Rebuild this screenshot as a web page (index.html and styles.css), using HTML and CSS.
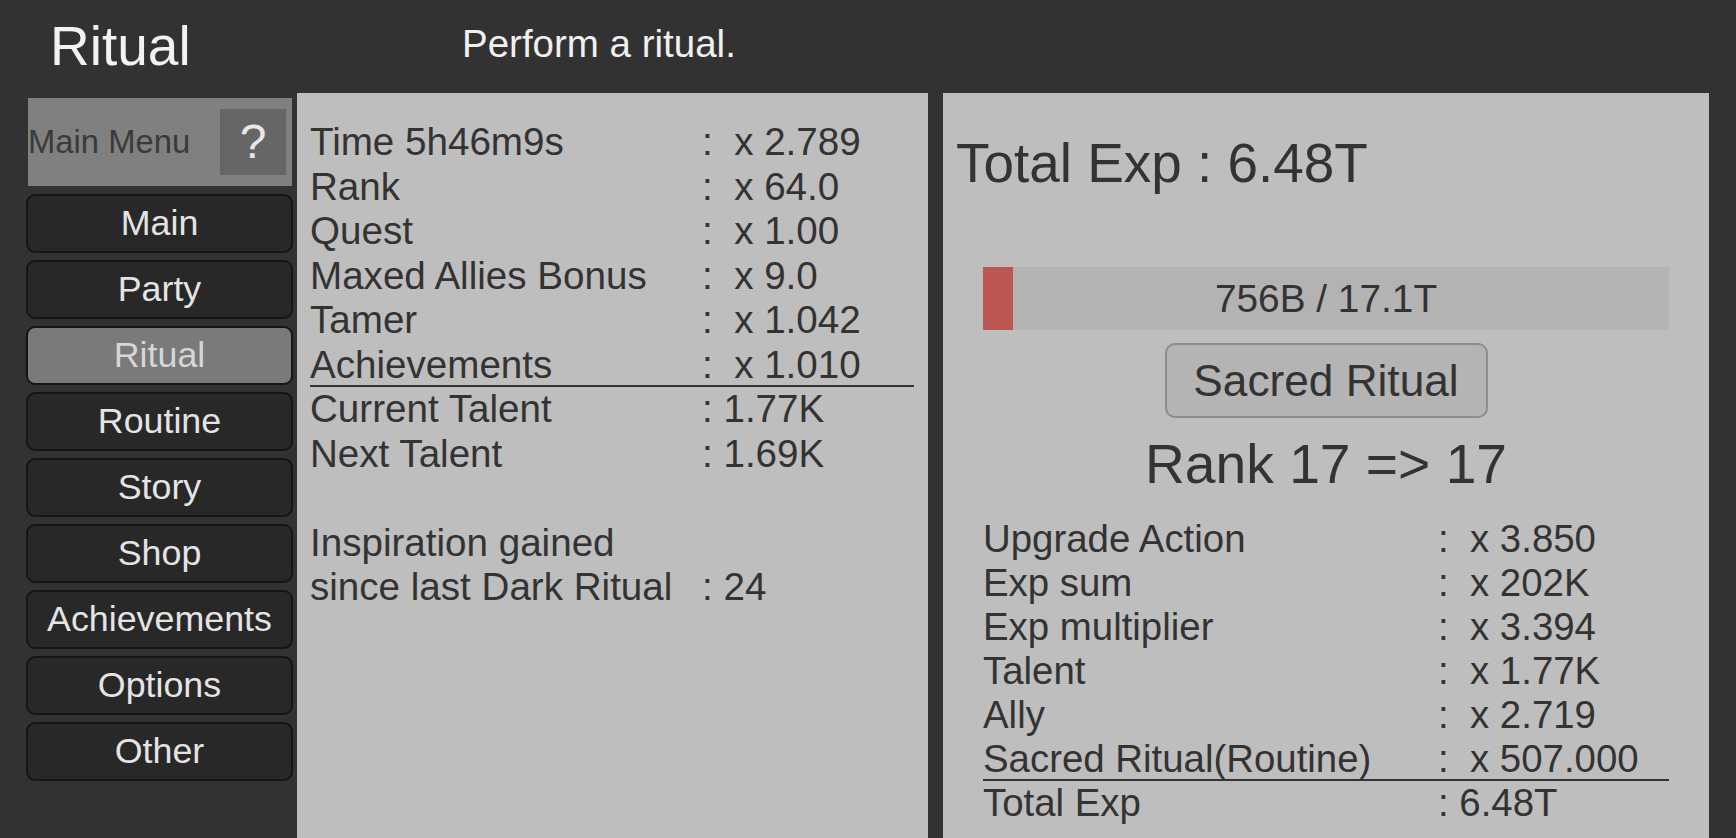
FILE: index.html
```html
<!DOCTYPE html>
<html lang="en">
<head>
<meta charset="utf-8">
<title>Ritual</title>
<link rel="stylesheet" href="styles.css">
</head>
<body>
<div class="app">
  <header class="top">
    <h1 class="title">Ritual</h1>
    <p class="subtitle">Perform a ritual.</p>
  </header>
  <div class="main">
    <nav class="sidebar">
      <div class="menu-head">
        <span class="menu-label">Main Menu</span>
        <span class="help">?</span>
      </div>
      <button class="nav-btn">Main</button>
      <button class="nav-btn">Party</button>
      <button class="nav-btn active">Ritual</button>
      <button class="nav-btn">Routine</button>
      <button class="nav-btn">Story</button>
      <button class="nav-btn">Shop</button>
      <button class="nav-btn">Achievements</button>
      <button class="nav-btn">Options</button>
      <button class="nav-btn">Other</button>
    </nav>
    <section class="panel panel-mid">
      <div class="row"><span>Time 5h46m9s</span><span>:  x 2.789</span></div>
      <div class="row"><span>Rank</span><span>:  x 64.0</span></div>
      <div class="row"><span>Quest</span><span>:  x 1.00</span></div>
      <div class="row"><span>Maxed Allies Bonus</span><span>:  x 9.0</span></div>
      <div class="row"><span>Tamer</span><span>:  x 1.042</span></div>
      <div class="row sep"><span>Achievements</span><span>:  x 1.010</span></div>
      <div class="row"><span>Current Talent</span><span>: 1.77K</span></div>
      <div class="row"><span>Next Talent</span><span>: 1.69K</span></div>
      <div class="row"><span></span><span></span></div>
      <div class="row"><span>Inspiration gained</span><span></span></div>
      <div class="row"><span>since last Dark Ritual</span><span>: 24</span></div>
    </section>
    <section class="panel panel-right">
      <h2 class="total-head">Total Exp : 6.48T</h2>
      <div class="bar">
        <div class="bar-fill" style="width: 4.4%"></div>
        <span class="bar-text">756B / 17.1T</span>
      </div>
      <button class="ritual-btn">Sacred Ritual</button>
      <div class="rank">Rank 17 =&gt; 17</div>
      <div class="stats">
        <div class="row"><span>Upgrade Action</span><span>:  x 3.850</span></div>
        <div class="row"><span>Exp sum</span><span>:  x 202K</span></div>
        <div class="row"><span>Exp multiplier</span><span>:  x 3.394</span></div>
        <div class="row"><span>Talent</span><span>:  x 1.77K</span></div>
        <div class="row"><span>Ally</span><span>:  x 2.719</span></div>
        <div class="row sep"><span>Sacred Ritual(Routine)</span><span>:  x 507.000</span></div>
        <div class="row"><span>Total Exp</span><span>: 6.48T</span></div>
      </div>
    </section>
  </div>
</div>
</body>
</html>
```
FILE: styles.css
```css
* { box-sizing: border-box; }

html, body {
  margin: 0;
  padding: 0;
}

body {
  width: 1736px;
  height: 838px;
  overflow: hidden;
  background: #323232;
  font-family: "Liberation Sans", Arial, sans-serif;
}

.top {
  height: 93px;
  display: flex;
  align-items: flex-start;
}

.title {
  margin: 15px 0 0 50px;
  width: 412px;
  font-size: 55px;
  line-height: 62px;
  font-weight: normal;
  color: #f2f2f2;
}

.subtitle {
  margin: 22px 0 0 0;
  font-size: 38.5px;
  line-height: 43px;
  color: #f0f0f0;
}

.main {
  display: flex;
  height: 745px;
  padding-left: 26px;
}

.sidebar {
  width: 267px;
  flex: none;
  padding-top: 5px;
  display: flex;
  flex-direction: column;
  gap: 7px;
}

.menu-head {
  height: 88px;
  margin: 0 1px 1px 2px;
  background: #808080;
  display: flex;
  align-items: center;
  justify-content: space-between;
  padding-right: 6px;
}

.menu-label {
  font-size: 32.8px;
  color: #3a3a3a;
}

.help {
  width: 66px;
  height: 66px;
  background: #666666;
  color: #e8e8e8;
  font-size: 48px;
  line-height: 1;
  display: flex;
  align-items: center;
  justify-content: center;
}

.nav-btn {
  height: 59px;
  padding: 0;
  border: 2px solid #151515;
  border-radius: 9px;
  background: #282828;
  color: #e4e4e4;
  font-family: "Liberation Sans", Arial, sans-serif;
  font-size: 35.8px;
}

.nav-btn.active {
  background: #7a7a7a;
  color: #d6d6d6;
}

.panel {
  background: #bebebe;
  color: #333333;
  flex: none;
}

.panel-mid {
  width: 631px;
  margin-left: 4px;
  padding: 27.4px 14px 0 13px;
}

.row {
  display: grid;
  grid-template-columns: 392px 1fr;
  height: 44.5px;
  font-size: 38.6px;
  line-height: 44.5px;
  white-space: pre;
}

.row.sep {
  border-bottom: 2px solid #333333;
}

.panel-right {
  width: 766px;
  margin-left: 15px;
  padding-top: 38.5px;
}

.total-head {
  margin: 0;
  padding-left: 13px;
  font-size: 54.9px;
  line-height: 62px;
  font-weight: normal;
}

.bar {
  position: relative;
  margin: 73.5px 40px 0;
  height: 63px;
  background: #b3b3b3;
  display: flex;
  align-items: center;
  justify-content: center;
}

.bar-fill {
  position: absolute;
  left: 0;
  top: 0;
  bottom: 0;
  background: #bd5751;
}

.bar-text {
  position: relative;
  font-size: 38.8px;
}

.ritual-btn {
  display: block;
  margin: 13px auto 0;
  width: 323px;
  height: 75px;
  padding: 0;
  border: 2px solid #8c8c8c;
  border-radius: 10px;
  background: #b4b4b4;
  color: #333333;
  font-family: "Liberation Sans", Arial, sans-serif;
  font-size: 44.2px;
}

.rank {
  margin-top: 14.8px;
  text-align: center;
  font-size: 55.2px;
  line-height: 62px;
}

.stats {
  margin: 21.8px 40px 0;
}

.stats .row {
  grid-template-columns: 455px 1fr;
  height: 44px;
  font-size: 38.4px;
  line-height: 44px;
}
```
